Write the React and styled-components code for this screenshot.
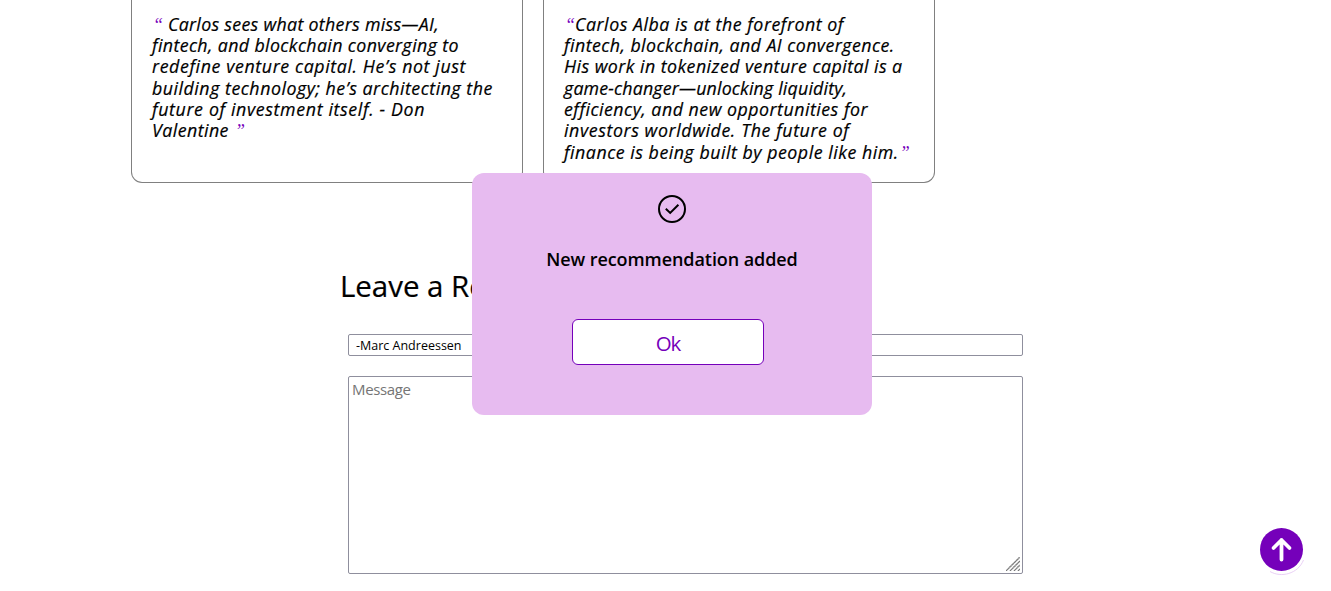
import React from "react";
import styled, { createGlobalStyle } from "styled-components";

const GlobalStyle = createGlobalStyle`
  * { box-sizing: border-box; }
  body {
    margin: 0;
    background: #fff;
    color: #000;
    font-family: "Trebuchet MS", "Open Sans", "Noto Sans", sans-serif;
    overflow: hidden;
  }
`;

const Page = styled.main`
  height: 591px;
  overflow: hidden;
`;

const Recommendations = styled.section`
  display: flex;
  gap: 20px;
  height: 183px;
  padding-left: 131px;
`;

const Card = styled.blockquote`
  width: 392px;
  margin: 0;
  padding: 13.8px 20px 0;
  border: 1px solid #808080;
  border-top: 0;
  border-radius: 0 0 11px 11px;
  font-size: 17.8px;
  font-style: italic;
  font-weight: 500;
  line-height: 21.3px;
  -webkit-text-stroke: 0.2px currentColor;
`;

const Line = styled.span`
  display: block;
  width: max-content;
  white-space: pre;
  letter-spacing: ${({ $spacing = 0 }) => $spacing}px;
`;

const Quote = styled.span`
  display: inline-block;
  width: 11px;
  color: #7500ba;
  font-family: "Liberation Serif", serif;
  font-size: 18px;
  font-weight: 400;
  letter-spacing: 0;
  line-height: 18px;
  text-align: right;
  -webkit-text-stroke: 0;
`;

const Form = styled.form`
  display: flex;
  flex-direction: column;
  width: 675px;
  margin: 85px 0 0 348px;
`;

const Title = styled.h2`
  margin: 0 0 30px -8px;
  font-size: 29.5px;
  font-weight: 400;
  line-height: 36px;
  white-space: nowrap;
  letter-spacing: -0.05px;
  -webkit-text-stroke: 0.2px currentColor;
`;

const NameInput = styled.input`
  height: 22px;
  margin: 0 0 20px;
  padding: 0 7px;
  border: 1px solid #8f8f9d;
  border-radius: 2px;
  background: #fff;
  color: #000;
  font: 400 12.5px "Trebuchet MS", "Open Sans", sans-serif;
`;

const MessageBox = styled.div`
  display: flex;
  justify-content: space-between;
  height: 198px;
  padding: 2px 2px 2px 3px;
  border: 1px solid #8f8f9d;
  border-radius: 2px;
  color: #757575;
  font-size: 15px;
  line-height: 20px;
  letter-spacing: -0.35px;
`;

const ResizeGrip = styled.svg`
  width: 14px;
  height: 14px;
  align-self: flex-end;
`;

const Dialog = styled.div`
  position: fixed;
  top: 173px;
  left: 472px;
  width: 400px;
  height: 242px;
  padding-top: 22px;
  display: flex;
  flex-direction: column;
  align-items: center;
  border-radius: 12px;
  background: #e7bbf0;
`;

const DialogIcon = styled.svg`
  width: 28px;
  height: 28px;
`;

const DialogText = styled.p`
  margin: 24px 0 47px;
  font-size: 18px;
  font-weight: 600;
  line-height: 25px;
  white-space: nowrap;
  letter-spacing: -0.08px;
`;

const OkButton = styled.button`
  width: 192px;
  height: 46px;
  margin-right: 8px;
  padding: 1px 0 0;
  border: 1px solid #7500ba;
  border-radius: 6px;
  background: #fff;
  color: #7500ba;
  font: 400 20.5px "Trebuchet MS", "Open Sans", sans-serif;
  letter-spacing: -1px;
`;

const ScrollTop = styled.button`
  position: fixed;
  top: 528px;
  left: 1260px;
  width: 43px;
  height: 47px;
  padding: 0;
  border: 0;
  background: none;
  svg { display: block; overflow: visible; }
`;

export default function App() {
  return (
    <>
      <GlobalStyle />
      <Page>
        <Recommendations>
          <Card>
            <Line $spacing={0.3}><Quote>“</Quote> Carlos sees what others miss—AI,</Line>
            <Line $spacing={0.38}>fintech, and blockchain converging to</Line>
            <Line $spacing={0.61}>redefine venture capital. He’s not just</Line>
            <Line $spacing={0.52}>building technology; he’s architecting the</Line>
            <Line $spacing={0.64}>future of investment itself. - Don</Line>
            <Line $spacing={0.45}>Valentine <Quote>”</Quote></Line>
          </Card>
          <Card>
            <Line $spacing={0.53}><Quote>“</Quote>Carlos Alba is at the forefront of</Line>
            <Line $spacing={0.45}>fintech, blockchain, and AI convergence.</Line>
            <Line $spacing={0.45}>His work in tokenized venture capital is a</Line>
            <Line $spacing={0.17}>game-changer—unlocking liquidity,</Line>
            <Line $spacing={0.5}>efficiency, and new opportunities for</Line>
            <Line $spacing={0.6}>investors worldwide. The future of</Line>
            <Line $spacing={0.52}>finance is being built by people like him.<Quote>”</Quote></Line>
          </Card>
        </Recommendations>
        <Form>
          <Title>Leave a Recommendation</Title>
          <NameInput defaultValue="-Marc Andreessen" aria-label="Name" />
          <MessageBox>
            Message
            <ResizeGrip viewBox="0 0 14 14" stroke="#777" strokeWidth="1.4" strokeDasharray="1.4 .2">
              <path d="M0 14 14 0M4 14 14 4M8 14l6-6M12 14l2-2" />
            </ResizeGrip>
          </MessageBox>
        </Form>
      </Page>
      <Dialog role="dialog">
        <DialogIcon viewBox="0 0 28 28" fill="none" stroke="#000" strokeWidth="2">
          <circle cx="14" cy="14" r="13" />
          <path d="m7.8 13.7 4.4 4.2 8.2-8.2" />
        </DialogIcon>
        <DialogText>New recommendation added</DialogText>
        <OkButton>Ok</OkButton>
      </Dialog>
      <ScrollTop aria-label="Back to top">
        <svg width="43" height="47" viewBox="0 0 43 47" fill="none">
          <path d="M10 43.5C21 50 38 46 43.5 32" stroke="#e3c4f2" strokeWidth=".8" />
          <circle cx="21.5" cy="21.5" r="21.5" fill="#7500ba" />
          <path d="M21.5 31.5V12M13.5 20l8-8 8 8" stroke="#fff" strokeWidth="3.8" strokeLinecap="round" strokeLinejoin="round" />
        </svg>
      </ScrollTop>
    </>
  );
}
